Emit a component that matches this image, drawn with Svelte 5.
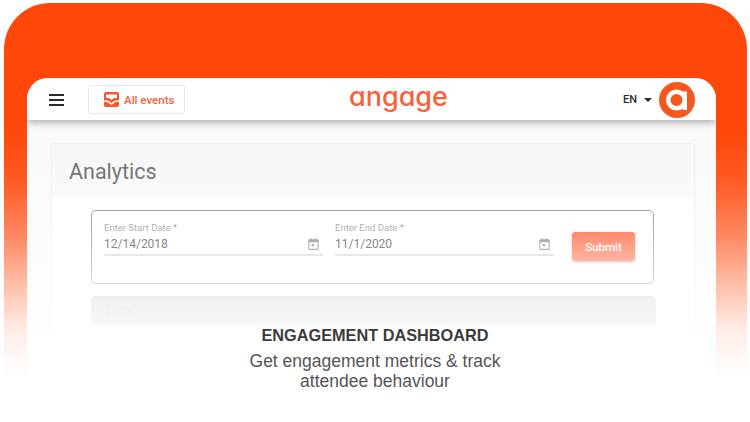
<script>
    const fields = [
        { label: 'Enter Start Date *', value: '12/14/2018' },
        { label: 'Enter End Date *', value: '11/1/2020' }
    ]
</script>

<div class="page">
    <div class="frame">
        <div class="window">
            <header class="topbar">
                <button class="menu" aria-label="menu">
                    <span></span><span></span><span></span>
                </button>
                <button class="all-events">
                    <svg width="15" height="15" viewBox="0 0 15 15">
                        <path fill="#f4582a" fill-rule="evenodd" d="M2 0h11a2 2 0 0 1 2 2v6.500h-4L7.500 11 4 8.500H0V2a2 2 0 0 1 2-2zM2 2.500V6h3l2.500 2L10 6h3V2.500z"/>
                        <path fill="#f4582a" d="M0 10h3.400l4.100 3 4.100-3H15v3a2 2 0 0 1-2 2H2a2 2 0 0 1-2-2z"/>
                    </svg>
                    All events
                </button>
                <div class="logo">angage</div>
                <div class="right">
                    <span class="lang">EN</span>
                    <span class="caret"></span>
                    <svg class="avatar" width="36" height="36" viewBox="0 0 36 36">
                        <circle cx="18" cy="18" r="18" fill="#f4581f"/>
                        <circle cx="17.500" cy="18" r="8.300" fill="none" stroke="#fff" stroke-width="4.400"/>
                        <path fill="#fff" d="M23.600 9.500h4.400V28h-4.400z"/>
                    </svg>
                </div>
            </header>
            <main class="content">
                <section class="card">
                    <h1>Analytics</h1>
                    <div class="card-body">
                        <form class="dates">
                            {#each fields as f}
                                <div class="field">
                                    <div class="label">{f.label}</div>
                                    <div class="input">
                                        <span>{f.value}</span>
                                        <svg width="11" height="12" viewBox="0 0 12 13">
                                            <path fill="#777" fill-rule="evenodd" d="M3 0h1v1.300h4V0h1v1.300h1.500A1.200 1.200 0 0 1 11.700 2.500v9.300a1.200 1.200 0 0 1-1.200 1.200h-9A1.200 1.200 0 0 1 .3 11.800V2.500a1.200 1.200 0 0 1 1.200-1.200H3zM1.500 4.500v7.300h9V4.500z"/>
                                            <rect x="4" y="6.500" width="2.500" height="2.500" fill="#777"/>
                                        </svg>
                                    </div>
                                </div>
                            {/each}
                            <button type="button" class="submit">Submit</button>
                        </form>
                        <div class="total">Total</div>
                    </div>
                </section>
            </main>
        </div>
    </div>
    <div class="fade"></div>
    <div class="caption">
        <h2>ENGAGEMENT DASHBOARD</h2>
        <p>Get engagement metrics &amp; track<br>attendee behaviour</p>
    </div>
</div>

<style>
    :global(body) {
        margin: 0;
        background: #fff;
    }
    .page {
        position: relative;
        width: 750px;
        height: 422px;
        overflow: hidden;
        background: #fff;
        font-family: Roboto, sans-serif;
    }
    .frame {
        box-sizing: border-box;
        margin: 3px 3px 0 4px;
        height: 419px;
        padding: 75px 31px 0 23px;
        background: #ff470a;
        border-radius: 46px 46px 0 0;
    }
    .window {
        height: 344px;
        background: #fafafa;
        border-radius: 21px 21px 0 0;
        overflow: hidden;
    }
    .topbar {
        position: relative;
        display: flex;
        align-items: center;
        box-sizing: border-box;
        height: 42px;
        padding: 1px 21px 0 22px;
        background: #fff;
        box-shadow: 0 2px 8px rgba(0, 0, 0, 0.35);
    }
    button {
        font-family: inherit;
        border: none;
        padding: 0;
    }
    .menu {
        display: flex;
        flex-direction: column;
        gap: 3px;
        width: 15px;
        background: none;
    }
    .menu span {
        height: 2px;
        background: #2b2b2b;
    }
    .all-events {
        display: flex;
        align-items: center;
        gap: 5px;
        box-sizing: border-box;
        width: 97px;
        height: 29px;
        margin-left: 24px;
        padding-left: 15px;
        background: #fff;
        border: 1px solid #e8e8e8;
        border-radius: 3px;
        color: #f4633a;
        font-size: 11.500px;
        font-weight: 500;
    }
    .logo {
        position: absolute;
        left: 322px;
        top: 0;
        width: 98px;
        line-height: 38px;
        text-align: center;
        color: #f4633a;
        font-family: Inter, sans-serif;
        font-size: 27px;
        font-weight: 500;
        font-feature-settings: "cv11";
    }
    .right {
        display: flex;
        align-items: center;
        margin-left: auto;
    }
    .lang {
        font-size: 11px;
        font-weight: 500;
        color: #2b2b2b;
    }
    .caret {
        width: 0;
        height: 0;
        margin: 1px 7px 0 7px;
        border: 4px solid transparent;
        border-top-color: #2b2b2b;
        border-bottom: none;
    }
    .content {
        padding: 24px 22px 0 25px;
    }
    .card {
        background: #fff;
        box-shadow: 0 0 2px rgba(0, 0, 0, 0.12);
    }
    h1 {
        margin: 0;
        height: 53px;
        padding-left: 17px;
        background: #f8f8f8;
        font-size: 21.500px;
        font-weight: 400;
        line-height: 56px;
        color: #6a6a6a;
    }
    .card-body {
        height: 200px;
        padding: 13px 38px 0 39px;
    }
    .dates {
        display: grid;
        grid-template-columns: 219px 219px 63px;
        column-gap: 12px;
        box-sizing: border-box;
        width: 563px;
        height: 74px;
        padding: 11px 0 0 12px;
        border: 1px solid #8a8a8a;
        border-radius: 5px;
    }
    .label {
        font-size: 9.500px;
        line-height: 12px;
        color: #8c8c8c;
    }
    .input {
        display: flex;
        align-items: center;
        justify-content: space-between;
        box-sizing: border-box;
        height: 23px;
        margin-top: -1px;
        padding-right: 4px;
        border-bottom: 2px solid #d4d4d4;
        font-size: 12px;
        color: #333;
    }
    .submit {
        width: 63px;
        height: 29px;
        margin: 10px 0 0 6px;
        background: linear-gradient(#ff4f22, #ff6a42);
        border-radius: 3px;
        box-shadow: 0 1px 3px rgba(0, 0, 0, 0.4);
        color: #fff;
        font-size: 11.500px;
        font-weight: 500;
    }
    .total {
        box-sizing: border-box;
        width: 565px;
        height: 30px;
        margin-top: 12px;
        padding: 7px 0 0 13px;
        background: #c9c9c9;
        border-radius: 5px 5px 0 0;
        font-size: 14px;
        color: #b4b4b4;
    }
    .fade {
        position: absolute;
        inset: 0;
        background: linear-gradient(
            to bottom,
            rgba(255, 255, 255, 0) 130px,
            rgba(255, 255, 255, 0.1) 180px,
            rgba(255, 255, 255, 0.35) 235px,
            rgba(255, 255, 255, 0.65) 285px,
            rgba(255, 255, 255, 0.9) 330px,
            #fff 375px
        );
    }
    .caption {
        position: absolute;
        left: 0;
        right: 0;
        top: 325px;
        text-align: center;
        font-family: "Liberation Sans", Arial, sans-serif;
    }
    h2 {
        margin: 0;
        font-size: 16.300px;
        line-height: 20px;
        color: #3c3c3c;
    }
    p {
        margin: 6px 0 0;
        font-size: 17.500px;
        line-height: 20px;
        color: #555;
    }
</style>
